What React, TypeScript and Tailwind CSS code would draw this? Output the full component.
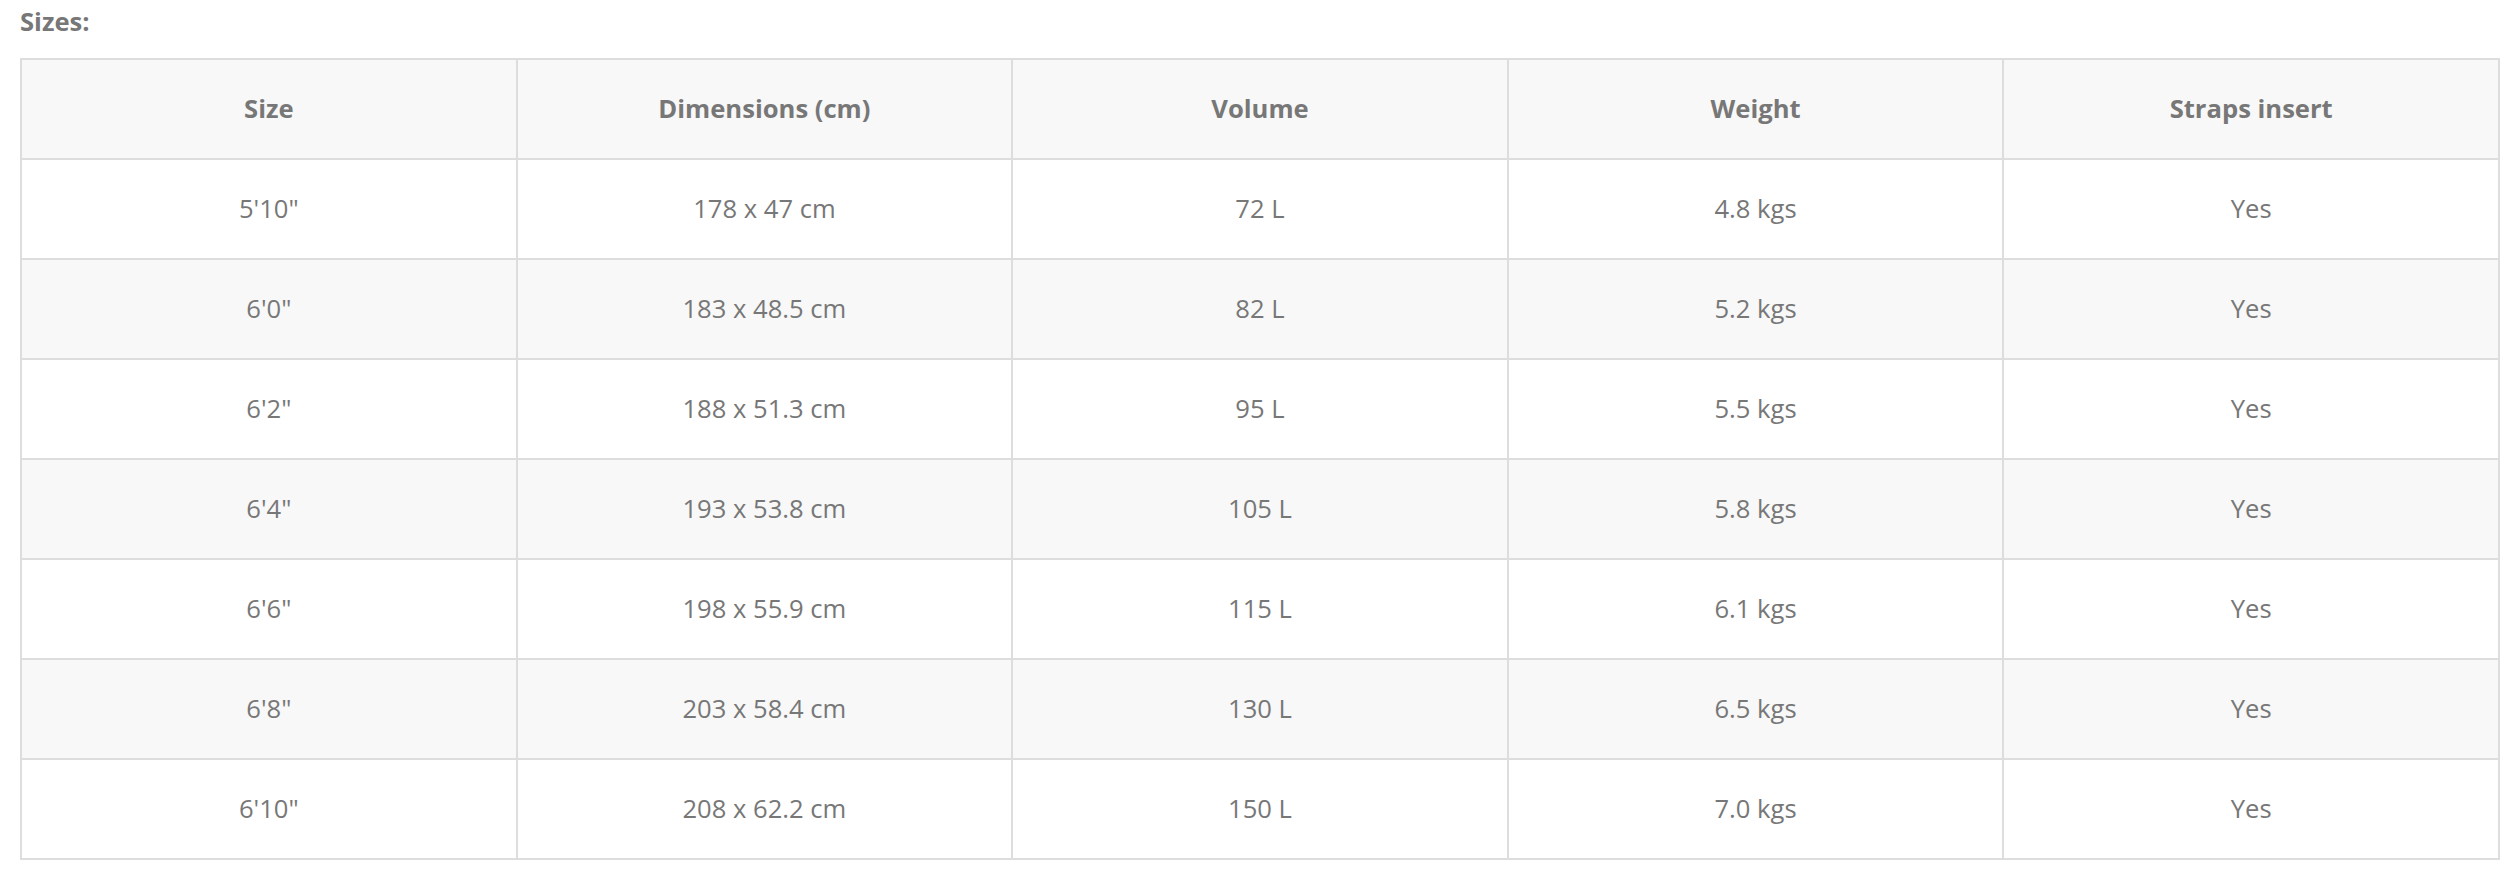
import React from "react";

const rows = [
  ["5'10\"", "178 x 47 cm", "72 L", "4.8 kgs", "Yes"],
  ["6'0\"", "183 x 48.5 cm", "82 L", "5.2 kgs", "Yes"],
  ["6'2\"", "188 x 51.3 cm", "95 L", "5.5 kgs", "Yes"],
  ["6'4\"", "193 x 53.8 cm", "105 L", "5.8 kgs", "Yes"],
  ["6'6\"", "198 x 55.9 cm", "115 L", "6.1 kgs", "Yes"],
  ["6'8\"", "203 x 58.4 cm", "130 L", "6.5 kgs", "Yes"],
  ["6'10\"", "208 x 62.2 cm", "150 L", "7.0 kgs", "Yes"],
];

const headers = ["Size", "Dimensions (cm)", "Volume", "Weight", "Straps insert"];

export default function App() {
  return (
    <div
      className="w-[2504px] h-[882px] bg-white px-[20px] pt-[3px] text-[#777]"
      style={{ fontFamily: '"Open Sans", "Liberation Sans", sans-serif' }}
    >
      <div className="text-[25.6px] leading-[38px] font-bold mb-[17px]">Sizes:</div>
      <table className="w-[2480px] table-fixed border-collapse text-[25.6px]">
        <thead>
          <tr className="bg-[#f8f8f8]">
            {headers.map((h) => (
              <th
                key={h}
                className="h-[100px] border-2 border-[#ddd] text-center align-middle font-bold p-0"
              >
                {h}
              </th>
            ))}
          </tr>
        </thead>
        <tbody>
          {rows.map((r, i) => (
            <tr key={i} className={i % 2 === 1 ? "bg-[#f8f8f8]" : "bg-white"}>
              {r.map((c, j) => (
                <td
                  key={j}
                  className="h-[100px] border-2 border-[#ddd] text-center align-middle font-normal p-0"
                >
                  {c}
                </td>
              ))}
            </tr>
          ))}
        </tbody>
      </table>
    </div>
  );
}
